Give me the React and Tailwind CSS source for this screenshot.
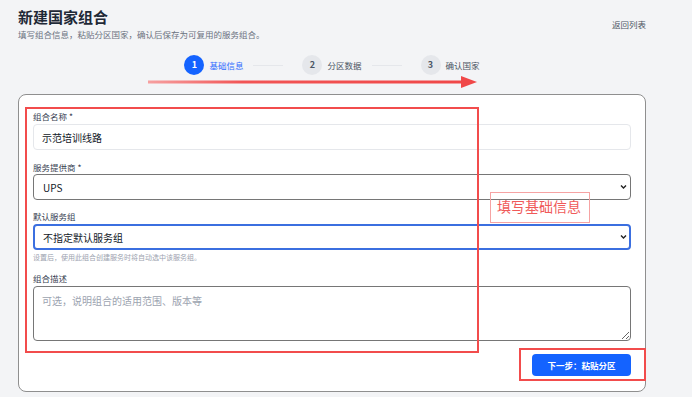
import { useState } from 'react'

const font = { fontFamily: '"Noto Sans CJK SC", "Noto Sans", sans-serif' }

function Step({ n, label, active }) {
  return (
    <div className="flex items-center gap-[5px]">
      <span
        className={`flex items-center justify-center w-[20px] h-[20px] rounded-full text-[9px] font-semibold ${
          active ? 'bg-[#1463ff] text-white' : 'bg-[#e5e7eb] text-[#4b5563]'
        }`}
      >
        {n}
      </span>
      <span className={`text-[8.5px] leading-[12px] ${active ? 'text-[#2f6bff]' : 'text-[#4b5563]'}`}>{label}</span>
    </div>
  )
}

function Label({ children, className = '' }) {
  return <label className={`block text-[8.5px] leading-[12px] text-[#374151] ${className}`}>{children}</label>
}

function Select({ value, onChange, className = '', children }) {
  return (
    <div className="relative">
      <select
        value={value}
        onChange={onChange}
        className={`block w-full h-[26px] appearance-none rounded-[4px] bg-white text-[10px] text-[#111827] outline-none ${className}`}
      >
        {children}
      </select>
      <svg className="absolute right-[4px] top-[10px] pointer-events-none" width="7" height="6" viewBox="0 0 7 6">
        <path d="M1 1.5 L3.5 4 L6 1.5" fill="none" stroke="#222" strokeWidth="1.4" />
      </svg>
    </div>
  )
}

export default function App() {
  const [name, setName] = useState('示范培训线路')
  const [provider, setProvider] = useState('UPS')
  const [group, setGroup] = useState('')

  return (
    <div style={font} className="relative w-[692px] h-[397px] overflow-hidden bg-[#f3f4f6] pl-[18px] pr-[46px] pt-[7px]">
      <div className="flex items-start justify-between">
        <div>
          <h1 className="text-[15px] leading-[20px] font-bold text-[#1f2937]">新建国家组合</h1>
          <p className="mt-[1px] text-[8.5px] leading-[12px] text-[#6b7280]">
            填写组合信息，粘贴分区国家，确认后保存为可复用的服务组合。
          </p>
        </div>
        <a className="mt-[11px] text-[8.5px] leading-[12px] text-[#4b5563]">返回列表</a>
      </div>

      <div className="mt-[15px] flex items-center justify-center">
        <Step n="1" label="基础信息" active />
        <span className="ml-[10px] mr-[19px] w-[30px] h-px bg-[#e5e7eb]" />
        <Step n="2" label="分区数据" />
        <span className="ml-[10px] mr-[19px] w-[30px] h-px bg-[#e5e7eb]" />
        <Step n="3" label="确认国家" />
      </div>

      <div className="mt-[19px] h-[298px] rounded-[8px] border border-[#8f8f8f] bg-white px-[14px] pt-[15px]">
        <Label>组合名称 *</Label>
        <input
          value={name}
          onChange={(e) => setName(e.target.value)}
          className="mt-[2px] block w-full h-[26px] rounded-[4px] border border-[#e5e7eb] px-[8px] text-[10px] text-[#111827] outline-none"
        />

        <Label className="mt-[11px]">服务提供商 *</Label>
        <div className="mt-px">
          <Select value={provider} onChange={(e) => setProvider(e.target.value)} className="border border-[#767676] px-[9px]">
            <option>UPS</option>
            <option>DHL</option>
            <option>FedEx</option>
          </Select>
        </div>

        <Label className="mt-[10px]">默认服务组</Label>
        <div className="mt-[2px]">
          <Select value={group} onChange={(e) => setGroup(e.target.value)} className="border-2 border-[#3b6fe0] px-[8px]">
            <option value="">不指定默认服务组</option>
          </Select>
        </div>
        <p className="mt-[2px] text-[7px] leading-[10px] text-[#9ca3af]">设置后，使用此组合创建服务时将自动选中该服务组。</p>

        <Label className="mt-[10px]">组合描述</Label>
        <textarea
          placeholder="可选，说明组合的适用范围、版本等"
          className="mt-[2px] block w-full h-[55px] rounded-[4px] border border-[#767676] px-[8px] py-[6px] text-[10px] text-[#111827] placeholder:text-[#9ca3af] outline-none"
        />

        <div className="mt-[13px] flex justify-end">
          <button className="h-[22px] w-[99px] rounded-[4px] bg-[#1463ff] text-[8.5px] font-bold text-white">
            下一步：粘贴分区
          </button>
        </div>
      </div>

      {/* annotations */}
      <svg className="absolute left-0 top-0 pointer-events-none" width="692" height="397">
        <defs>
          <linearGradient id="arr" x1="0" x2="1" y1="0" y2="0">
            <stop offset="0" stopColor="#f6a0a0" />
            <stop offset="0.3" stopColor="#f25555" />
            <stop offset="1" stopColor="#f04848" />
          </linearGradient>
        </defs>
        <rect x="148" y="80.5" width="315" height="3" fill="url(#arr)" />
        <polygon points="461,76 477,82 461,88" fill="#f04848" />
        <rect x="26" y="108" width="452" height="244" fill="none" stroke="#f24c4c" strokeWidth="2" />
        <rect x="520" y="349" width="125" height="31" fill="none" stroke="#f24c4c" strokeWidth="2" />
        <rect x="490.5" y="192.5" width="99" height="30" fill="none" stroke="#f6a3a3" strokeWidth="1" />
      </svg>
      <span className="absolute left-[497px] top-[197px] text-[14px] leading-[18px] text-[#f05a5a] pointer-events-none">
        填写基础信息
      </span>
    </div>
  )
}
